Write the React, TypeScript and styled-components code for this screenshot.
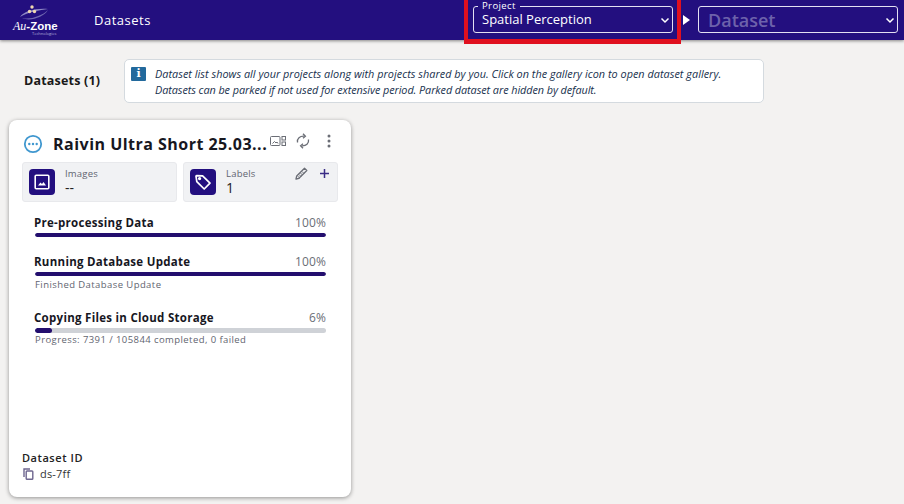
import styled, { createGlobalStyle } from "styled-components";

const GlobalStyle = createGlobalStyle`
    html, body { margin: 0; padding: 0; background: #f3f2f1; }
    body { font-family: "Open Sans", "Liberation Sans", sans-serif; color: #1a1a1a; }
    * { box-sizing: border-box; }
`;

const Page = styled.div`
    width: 904px;
    height: 504px;
    overflow: hidden;
    position: relative;
`;

const Header = styled.header`
    height: 40px;
    background: #230f7f;
    box-shadow: 0 1px 3px rgba(0,0,0,0.45);
    display: flex;
    align-items: center;
    padding: 0 6px 0 12px;
`;

const Logo = styled.div`
    width: 48px;
    height: 36px;
    position: relative;
    flex: none;
    color: #fff;
`;

const LogoName = styled.div`
    position: absolute;
    left: 1px;
    top: 17px;
    font-family: "Liberation Sans", sans-serif;
    font-size: 11.5px;
    font-weight: 700;
    white-space: nowrap;
    em { font-family: "Liberation Serif", serif; font-weight: 400; font-size: 12px; }
`;

const LogoSub = styled.div`
    position: absolute;
    left: 20px;
    top: 29px;
    font-size: 4px;
    color: #b9b3dc;
    white-space: nowrap;
`;

const PageName = styled.div`
    margin-left: 34px;
    color: #fff;
    font-size: 13px;
    letter-spacing: 0.5px;
    flex: 1;
`;

const Selects = styled.div`
    display: flex;
    align-items: center;
    margin-top: -1px;
`;

const Field = styled.div`
    width: 200px;
    height: 27px;
    border: 1px solid #e3e0f2;
    border-radius: 3px;
    position: relative;
    display: flex;
    align-items: center;
    padding: 0 2px 0 8px;
`;

const Legend = styled.span`
    position: absolute;
    top: -7px;
    left: 4px;
    padding: 0 4px;
    background: #230f7f;
    color: #fff;
    font-size: 9.5px;
    line-height: 11px;
    letter-spacing: 0.4px;
`;

const FieldValue = styled.span<{ $muted?: boolean }>`
    flex: 1;
    color: ${props => props.$muted ? "#6d62ab" : "#fff"};
    font-size: ${props => props.$muted ? "18px" : "13px"};
    font-weight: ${props => props.$muted ? 600 : 400};
    line-height: ${props => props.$muted ? "24px" : "16px"};
    padding: ${props => props.$muted ? "0 0 0 1px" : "0 0 1px 0"};
`;

const Arrow = styled.div`
    width: 0;
    height: 0;
    margin: 0 8px 0 10px;
    border-left: 7px solid #fff;
    border-top: 5px solid transparent;
    border-bottom: 5px solid transparent;
`;

const Highlight = styled.div`
    position: absolute;
    left: 464px;
    top: -6px;
    width: 217px;
    height: 50px;
    border: 4px solid #e0101f;
    border-bottom-width: 5px;
`;

const Toolbar = styled.div`
    display: flex;
    align-items: center;
    padding: 19px 0 0 24px;
`;

const Count = styled.div`
    width: 100px;
    margin-top: -1px;
    font-size: 12.5px;
    font-weight: 700;
    letter-spacing: 0.2px;
`;

const Notice = styled.div`
    width: 640px;
    height: 44px;
    background: #fff;
    border: 1px solid #d4dadf;
    border-radius: 5px;
    display: flex;
    padding: 7px 6px;
    gap: 9px;
`;

const NoticeIcon = styled.div`
    width: 15px;
    height: 14px;
    flex: none;
    background: #22699c;
    border-radius: 1px;
    color: #fff;
    font-family: "DejaVu Serif", serif;
    font-size: 11px;
    font-weight: 700;
    line-height: 14px;
    text-align: center;
`;

const NoticeText = styled.div`
    margin-top: -1px;
`;

const NoticeLine = styled.div<{ $spacing: number }>`
    font-size: 10.85px;
    line-height: 16px;
    font-style: italic;
    color: #17304d;
    white-space: nowrap;
    letter-spacing: ${props => props.$spacing}px;
`;

const Card = styled.section`
    width: 342px;
    height: 377px;
    margin: 17px 0 0 9px;
    background: #fff;
    border-radius: 8px;
    box-shadow: 0 1px 4px rgba(0,0,0,0.4);
    padding: 0 12px 0 13px;
    display: flex;
    flex-direction: column;
`;

const CardTop = styled.div`
    height: 42px;
    display: flex;
    align-items: center;
    padding: 6px 0 0 1px;
`;

const Title = styled.h2`
    margin: 0 0 0 10px;
    flex: 1;
    min-width: 0;
    font-size: 16px;
    font-weight: 700;
    color: #17171f;
    letter-spacing: 0.48px;
    white-space: nowrap;
`;

const TopIcons = styled.div`
    display: flex;
    align-items: center;
    margin: -6px 8px 0 0;
`;

const SyncSlot = styled.div`
    margin: 0 17px 0 10px;
    display: flex;
`;

const Stats = styled.div`
    display: flex;
    gap: 6px;
`;

const Stat = styled.div`
    height: 40px;
    width: 155px;
    background: #f1f2f4;
    border: 1px solid #e8e9ec;
    border-radius: 3px;
    display: flex;
    align-items: center;
    padding-left: 6px;
    position: relative;
`;

const StatIcon = styled.div`
    width: 26px;
    height: 26px;
    background: #230f7f;
    border-radius: 4px;
    display: flex;
    align-items: center;
    justify-content: center;
    flex: none;
`;

const StatBody = styled.div`
    margin-left: 10px;
    margin-top: -1px;
`;

const StatLabel = styled.div`
    font-size: 9.5px;
    line-height: 12px;
    color: #5f6470;
    letter-spacing: 0.2px;
`;

const StatValue = styled.div`
    font-size: 14px;
    line-height: 15px;
    color: #222;
`;

const StatActions = styled.div`
    position: absolute;
    right: 7px;
    top: 4px;
    display: flex;
    gap: 11px;
    align-items: center;
`;

const Progresses = styled.div`
    padding: 13px 13px 0 13px;
    flex: 1;
`;

const Progress = styled.div<{ $gap: number }>`
    margin-bottom: ${props => props.$gap}px;
`;

const ProgressHead = styled.div`
    display: flex;
    justify-content: space-between;
    align-items: baseline;
    height: 16px;
    line-height: 16px;
`;

const ProgressName = styled.span`
    font-size: 11.5px;
    font-weight: 700;
    color: #17171f;
    letter-spacing: 0.28px;
    margin-left: -1px;
`;

const ProgressPct = styled.span`
    font-size: 12px;
    color: #6b6e76;
    letter-spacing: 0.1px;
`;

const Track = styled.div<{ $thick?: boolean }>`
    height: ${props => props.$thick ? "5px" : "4px"};
    margin: 2px 0 ${props => props.$thick ? "-2px" : "0"};
    background: #cfd2d7;
    border-radius: 3px;
    overflow: hidden;
`;

const Fill = styled.div`
    height: 100%;
    background: #230e6e;
    border-radius: 3px;
`;

const ProgressNote = styled.div`
    font-size: 9.5px;
    line-height: 12px;
    margin-top: 3px;
    color: #5f6470;
    letter-spacing: 0.42px;
    white-space: nowrap;
`;

const Footer = styled.div`
    padding: 0 0 15px 0;
`;

const FooterLabel = styled.div`
    font-size: 11px;
    line-height: 16px;
    font-weight: 600;
    color: #222;
    letter-spacing: 0.55px;
`;

const FooterValue = styled.div`
    display: flex;
    align-items: center;
    gap: 6px;
    padding-left: 1px;
    font-size: 11px;
    line-height: 16px;
    color: #333;
    letter-spacing: 0.2px;
`;

const Chevron = () => (
    <svg width="10" height="10" viewBox="0 0 10 10" fill="none" stroke="#fff" strokeWidth="1.5">
        <path d="M1.5 3.5 5 7l3.5-3.5" />
    </svg>
);

const progresses = [
    { name: "Pre-processing Data", pct: 100, gap: 17 },
    { name: "Running Database Update", pct: 100, note: "Finished Database Update", gap: 19 },
    { name: "Copying Files in Cloud Storage", pct: 6, note: "Progress: 7391 / 105844 completed, 0 failed", gap: 0 },
];

function App() {
    return (
        <Page>
            <GlobalStyle />
            <Header>
                <Logo>
                    <svg width="48" height="20" viewBox="0 0 48 20" fill="none">
                        <path d="M8 15C12 9 24 6 36 7 28 8 16 10 8 15Z" fill="#8f88c4" />
                        <path d="M10 16C18 18 30 14 36 8 32 15 18 20 10 16Z" fill="#6f66b0" />
                        <circle cx="20" cy="5" r="1.7" fill="#f0d8b0" />
                        <circle cx="17.5" cy="9.5" r="1.7" fill="#f0d8b0" />
                        <circle cx="22.5" cy="9.5" r="1.7" fill="#f0d8b0" />
                    </svg>
                    <LogoName><em>Au</em>-Zone</LogoName>
                    <LogoSub>Technologies</LogoSub>
                </Logo>
                <PageName>Datasets</PageName>
                <Selects>
                    <Field>
                        <Legend>Project</Legend>
                        <FieldValue>Spatial Perception</FieldValue>
                        <Chevron />
                    </Field>
                    <Arrow />
                    <Field>
                        <FieldValue $muted>Dataset</FieldValue>
                        <Chevron />
                    </Field>
                </Selects>
            </Header>
            <Highlight />
            <Toolbar>
                <Count>Datasets (1)</Count>
                <Notice>
                    <NoticeIcon>i</NoticeIcon>
                    <NoticeText>
                        <NoticeLine $spacing={0.03}>Dataset list shows all your projects along with projects shared by you. Click on the gallery icon to open dataset gallery.</NoticeLine>
                        <NoticeLine $spacing={-0.07}>Datasets can be parked if not used for extensive period. Parked dataset are hidden by default.</NoticeLine>
                    </NoticeText>
                </Notice>
            </Toolbar>
            <Card>
                <CardTop>
                    <svg width="20" height="20" viewBox="0 0 20 20" fill="none">
                        <circle cx="10" cy="10" r="8.2" stroke="#3f97cf" strokeWidth="1.8" />
                        <circle cx="6.3" cy="10" r="1.2" fill="#3f97cf" />
                        <circle cx="10" cy="10" r="1.2" fill="#3f97cf" />
                        <circle cx="13.7" cy="10" r="1.2" fill="#3f97cf" />
                    </svg>
                    <Title>Raivin Ultra Short 25.03...</Title>
                    <TopIcons>
                        <svg width="16" height="12" viewBox="0 0 16 12" fill="none" stroke="#6b6e76">
                            <rect x="0.5" y="1.5" width="9.5" height="9" rx="1" />
                            <path d="M2.5 8.5 4.5 6.5 6 8 7 7l1 1.5" />
                            <rect x="12" y="1.5" width="3.5" height="3.5" />
                            <rect x="12" y="7" width="3.5" height="3.5" />
                        </svg>
                        <SyncSlot>
                            <svg width="14" height="16" viewBox="0 0 14 16" fill="none" stroke="#6b6e76" strokeWidth="1.3">
                                <path d="M1.5 9.5C.8 5.5 4 3 8 3.2" />
                                <path d="M12.5 6.5c.7 4-2.5 6.5-6.5 6.3" />
                                <path d="M7 .8 9.4 3.2 7 5.2" />
                                <path d="M7 10.8 4.6 12.8 7 15.2" />
                            </svg>
                        </SyncSlot>
                        <svg width="4" height="14" viewBox="0 0 4 14" fill="#6b6e76">
                            <circle cx="2" cy="2" r="1.5" />
                            <circle cx="2" cy="7" r="1.5" />
                            <circle cx="2" cy="12" r="1.5" />
                        </svg>
                    </TopIcons>
                </CardTop>
                <Stats>
                    <Stat>
                        <StatIcon>
                            <svg width="16" height="16" viewBox="0 0 16 16" fill="none">
                                <rect x="1.2" y="1.2" width="13.6" height="13.6" rx="1" stroke="#fff" strokeWidth="1.6" />
                                <path d="M4 11.5 6.5 8.5 8 10l1.5-2 2.5 3.5Z" fill="#fff" />
                            </svg>
                        </StatIcon>
                        <StatBody>
                            <StatLabel>Images</StatLabel>
                            <StatValue>--</StatValue>
                        </StatBody>
                    </Stat>
                    <Stat>
                        <StatIcon>
                            <svg width="18" height="18" viewBox="0 0 18 18" fill="none" stroke="#fff" strokeWidth="1.7">
                                <path d="M2 3.2 2.6 2.6 8.6 2.8 16 10.2 10.2 16 2.8 8.6Z" strokeLinejoin="round" />
                                <circle cx="5.6" cy="5.6" r="0.8" fill="#fff" />
                            </svg>
                        </StatIcon>
                        <StatBody>
                            <StatLabel>Labels</StatLabel>
                            <StatValue>1</StatValue>
                        </StatBody>
                        <StatActions>
                            <svg width="13" height="13" viewBox="0 0 13 13" fill="none" stroke="#6b6e76" strokeWidth="1.3">
                                <path d="M1 12l.7-3L9.5 1.2l2.3 2.3L4 11.3Z" strokeLinejoin="round" />
                                <path d="M2.5 9 5 11.3M4 7.5l2 2M5.5 6l2 2M7 4.5l2 2" strokeWidth="0.9" />
                            </svg>
                            <svg width="11" height="11" viewBox="0 0 11 11" stroke="#3b2d86" strokeWidth="1.5">
                                <path d="M5.5 1v9M1 5.5h9" />
                            </svg>
                        </StatActions>
                    </Stat>
                </Stats>
                <Progresses>
                    {progresses.map(item => (
                        <Progress key={item.name} $gap={item.gap}>
                            <ProgressHead>
                                <ProgressName>{item.name}</ProgressName>
                                <ProgressPct>{item.pct}%</ProgressPct>
                            </ProgressHead>
                            <Track $thick={item.pct < 100}>
                                <Fill style={{ width: `${item.pct}%` }} />
                            </Track>
                            {item.note && <ProgressNote>{item.note}</ProgressNote>}
                        </Progress>
                    ))}
                </Progresses>
                <Footer>
                    <FooterLabel>Dataset ID</FooterLabel>
                    <FooterValue>
                        <svg width="11" height="12" viewBox="0 0 11 12" fill="none" stroke="#6e668f" strokeWidth="1.4">
                            <path d="M1 9V1h6" />
                            <rect x="3.2" y="3" width="6.6" height="8.2" rx="0.8" />
                        </svg>
                        ds-7ff
                    </FooterValue>
                </Footer>
            </Card>
        </Page>
    );
}

export default App;
